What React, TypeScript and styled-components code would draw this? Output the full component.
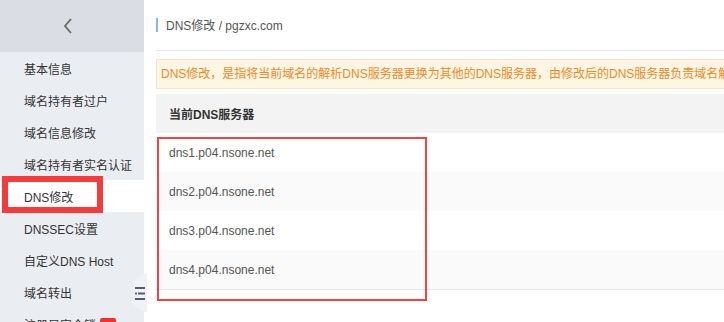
import React from "react";
import styled, { createGlobalStyle } from "styled-components";

const Global = createGlobalStyle`
  html, body { margin: 0; padding: 0; background: #fff; }
  body {
    font-family: "Liberation Sans", "Noto Sans CJK SC", sans-serif;
    font-size: 12px;
    color: #333;
    overflow: hidden;
  }
`;

const Page = styled.div`
  display: flex;
  width: 724px;
  height: 322px;
  overflow: hidden;
`;

const Sidebar = styled.aside`
  position: relative;
  flex: 0 0 144px;
  display: flex;
  flex-direction: column;
  background: #eaedf1;
`;

const SideHeader = styled.div`
  height: 52px;
  flex: 0 0 52px;
  display: flex;
  align-items: center;
  padding-left: 63px;
  background: #dadde3;
`;

const MenuItem = styled.div<{ $active?: boolean }>`
  flex: 0 0 32px;
  height: 32px;
  display: flex;
  align-items: center;
  padding-left: 24px;
  gap: 4px;
  background: ${(p) => (p.$active ? "#ffffff" : "transparent")};
  color: #333;
  white-space: nowrap;
`;

const Badge = styled.span`
  display: inline-block;
  width: 16px;
  height: 12px;
  background: #f23030;
  border-radius: 2px;
`;

const Annotation = styled.div`
  position: absolute;
  left: 2px;
  top: 176px;
  width: 101px;
  height: 37px;
  box-sizing: border-box;
  border: 6px solid #f73a3a;
`;

const Toggle = styled.div`
  position: absolute;
  left: 133px;
  top: 273px;
  width: 14px;
  height: 40px;
  background: #f1f2f5;
  clip-path: polygon(0 18%, 100% 0, 100% 100%, 0 82%);
  display: flex;
  align-items: center;
  justify-content: center;
`;

const Main = styled.main`
  flex: 0 0 660px;
  padding-left: 12px;
  display: flex;
  flex-direction: column;
`;

const Breadcrumb = styled.div`
  height: 51px;
  flex: 0 0 51px;
  display: flex;
  align-items: center;
  gap: 8px;
  border-bottom: 1px solid #e8e8e8;
  color: #555;
  padding-bottom: 1px;
  box-sizing: border-box;
`;

const Bar = styled.span`
  width: 2px;
  height: 14px;
  background: #8db4df;
`;

const Alert = styled.div`
  margin-top: 8px;
  height: 30px;
  box-sizing: border-box;
  border: 1px solid #fbe3bd;
  border-right: none;
  background: #fdf6e4;
  color: #f08a1c;
  line-height: 28px;
  padding-left: 4px;
  white-space: nowrap;
  overflow: hidden;
`;

const TableWrap = styled.div`
  position: relative;
  margin-top: 5px;
  display: flex;
  flex-direction: column;
  border-bottom: 1px solid #e8e8e8;
`;

const HeadCell = styled.div`
  height: 39px;
  display: flex;
  align-items: center;
  padding-left: 13px;
  background: #f3f3f3;
  font-weight: bold;
  color: #333;
`;

const Row = styled.div<{ $striped?: boolean }>`
  height: 39px;
  display: flex;
  align-items: center;
  padding-left: 13px;
  background: ${(p) => (p.$striped ? "#fafafa" : "#ffffff")};
  color: #555;
`;

const Outline = styled.div`
  position: absolute;
  left: 1px;
  top: 43px;
  width: 270px;
  height: 164px;
  box-sizing: border-box;
  border: 2px solid #ec4545;
`;

const menu = [
  "基本信息",
  "域名持有者过户",
  "域名信息修改",
  "域名持有者实名认证",
  "DNS修改",
  "DNSSEC设置",
  "自定义DNS Host",
  "域名转出",
];

const servers = [
  "dns1.p04.nsone.net",
  "dns2.p04.nsone.net",
  "dns3.p04.nsone.net",
  "dns4.p04.nsone.net",
];

export default function App() {
  return (
    <>
      <Global />
      <Page>
        <Sidebar>
          <SideHeader>
            <svg width="10" height="16" viewBox="0 0 10 16">
              <polyline points="8,1 2,8 8,15" fill="none" stroke="#666" strokeWidth="1.8" />
            </svg>
          </SideHeader>
          {menu.map((m) => (
            <MenuItem key={m} $active={m === "DNS修改"}>
              {m}
            </MenuItem>
          ))}
          <MenuItem>
            注册局安全锁
            <Badge />
          </MenuItem>
          <Annotation />
          <Toggle>
            <svg width="10" height="13" viewBox="0 0 10 13">
              <rect x="0" y="0" width="10" height="2" fill="#555d6b" />
              <rect x="0" y="5.5" width="2" height="2" fill="#3f6fb0" />
              <rect x="3" y="5.5" width="7" height="2" fill="#555d6b" />
              <rect x="0" y="11" width="10" height="2" fill="#555d6b" />
            </svg>
          </Toggle>
        </Sidebar>
        <Main>
          <Breadcrumb>
            <Bar />
            <span>DNS修改 / pgzxc.com</span>
          </Breadcrumb>
          <Alert>
            DNS修改，是指将当前域名的解析DNS服务器更换为其他的DNS服务器，由修改后的DNS服务器负责域名解析。
          </Alert>
          <TableWrap>
            <HeadCell>当前DNS服务器</HeadCell>
            {servers.map((s, i) => (
              <Row key={s} $striped={i % 2 === 1}>
                {s}
              </Row>
            ))}
            <Outline />
          </TableWrap>
        </Main>
      </Page>
    </>
  );
}
